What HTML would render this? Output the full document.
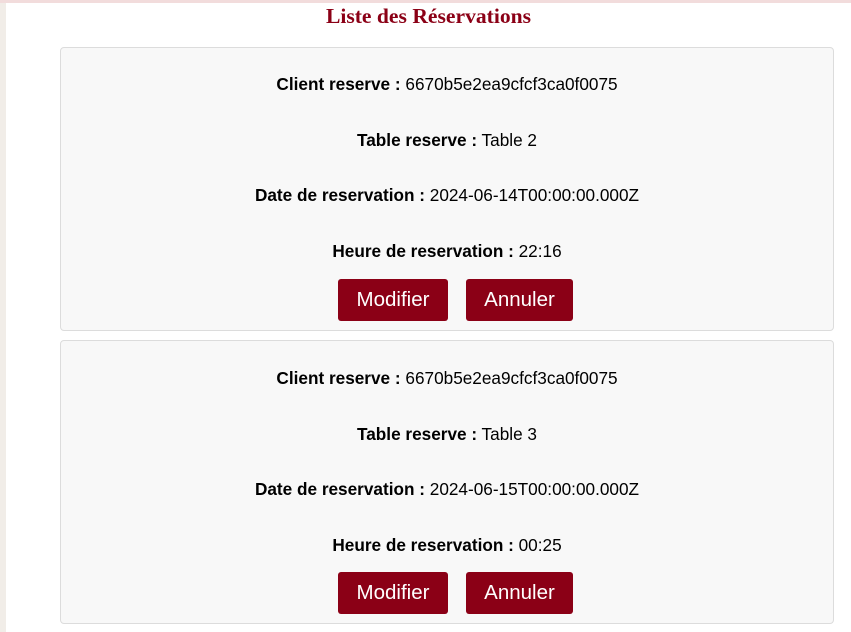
<!DOCTYPE html>
<html><head><meta charset="utf-8"><style>
body{margin:0;width:851px;height:632px;background:#fff;position:relative;overflow:hidden;font-family:"Liberation Sans",Arial,sans-serif;}
.top{position:absolute;left:0;top:0;width:851px;height:3px;background:#f2dcdc}
.left{position:absolute;left:0;top:3px;width:6px;height:629px;background:#f1ede8}
h1{position:absolute;left:0;width:857px;top:4px;margin:0;text-align:center;font-family:"Liberation Serif",serif;font-weight:bold;font-size:21.6px;color:#8b0016}
.card{position:absolute;left:60px;width:772px;height:282px;background:#f8f8f8;border:1px solid #dcdcdc;border-radius:4px}
.l{position:absolute;left:0;width:100%;text-align:center;font-size:17.2px;color:#000;line-height:20px}
.btn{position:absolute;top:231px;height:42px;background:#8b0016;color:#fff;border-radius:3px;font-size:20.5px;line-height:42px;text-align:center}
</style></head><body>
<div class="top"></div><div class="left"></div>
<h1>Liste des Réservations</h1>
<div class="card" style="top:47px">
<div class="l" style="top:26px"><b>Client reserve :</b> 6670b5e2ea9cfcf3ca0f0075</div>
<div class="l" style="top:82px"><b>Table reserve :</b> Table 2</div>
<div class="l" style="top:137px"><b>Date de reservation :</b> 2024-06-14T00:00:00.000Z</div>
<div class="l" style="top:193px"><b>Heure de reservation :</b> 22:16</div>
<div class="btn" style="left:277px;width:110px">Modifier</div>
<div class="btn" style="left:405px;width:107px">Annuler</div>
</div>
<div class="card" style="top:340px">
<div class="l" style="top:27px"><b>Client reserve :</b> 6670b5e2ea9cfcf3ca0f0075</div>
<div class="l" style="top:83px"><b>Table reserve :</b> Table 3</div>
<div class="l" style="top:138px"><b>Date de reservation :</b> 2024-06-15T00:00:00.000Z</div>
<div class="l" style="top:194px"><b>Heure de reservation :</b> 00:25</div>
<div class="btn" style="left:277px;width:110px">Modifier</div>
<div class="btn" style="left:405px;width:107px">Annuler</div>
</div>
</body></html>
